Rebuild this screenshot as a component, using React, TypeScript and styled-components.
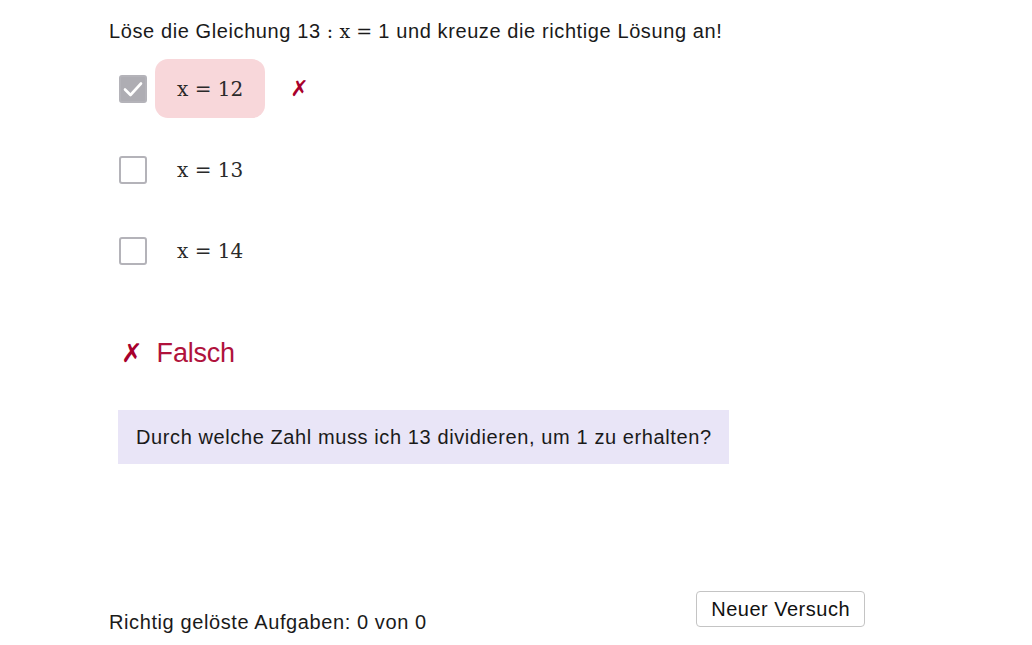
import React from "react"
import styled, { createGlobalStyle } from "styled-components"

type Option = { value: number; checked: boolean; wrong?: boolean }

const options: Option[] = [
  { value: 12, checked: true, wrong: true },
  { value: 13, checked: false },
  { value: 14, checked: false },
]

const CheckIcon = () => (
  <svg width="20" height="16" viewBox="0 0 20 16">
    <path d="M2 8.5 L7.5 14 L18 2.5" fill="none" stroke="#fff" strokeWidth="2.6" strokeLinecap="round" strokeLinejoin="round" />
  </svg>
)

export default function App(): JSX.Element {
  return (
    <Page>
      <GlobalStyle />
      <Title>
        Löse die Gleichung 13 <Op>:</Op> <Var>x</Var> <Op>=</Op> 1 und kreuze die richtige Lösung an!
      </Title>

      <OptionList>
        {options.map((o) => (
          <OptionRow key={o.value}>
            <Checkbox $checked={o.checked}>{o.checked && <CheckIcon />}</Checkbox>
            <Answer $wrong={o.wrong}>
              <Math>x = {o.value}</Math>
            </Answer>
            {o.wrong && <Cross>✗</Cross>}
          </OptionRow>
        ))}
      </OptionList>

      <Verdict>
        <VerdictMark>✗</VerdictMark>Falsch
      </Verdict>

      <Hint>Durch welche Zahl muss ich 13 dividieren, um 1 zu erhalten?</Hint>

      <Footer>
        <Score>Richtig gelöste Aufgaben: 0 von 0</Score>
        <RetryButton>Neuer Versuch</RetryButton>
      </Footer>
    </Page>
  )
}

const GlobalStyle = createGlobalStyle`
  body {
    margin: 0;
    background: #fff;
    color: #1a1a1a;
    font-family: "Liberation Sans", Arial, sans-serif;
    letter-spacing: 0.6px;
  }
`

const Page = styled.div`
  width: 1032px;
  height: 645px;
  box-sizing: border-box;
  padding: 19px 0 0 109px;
  display: flex;
  flex-direction: column;
  align-items: flex-start;
`

const Title = styled.p`
  margin: 0;
  font-size: 20px;
  line-height: 24px;
`

const Var = styled.span`
  font-family: "DejaVu Serif", serif;
  font-size: 19px;
  letter-spacing: 0;
`

const Op = styled.span`
  font-family: "DejaVu Serif", serif;
  font-size: 19px;
  letter-spacing: 0;
`

const OptionList = styled.div`
  margin: 16px 0 0 10px;
  display: flex;
  flex-direction: column;
  gap: 22px;
`

const OptionRow = styled.div`
  display: flex;
  align-items: center;
  height: 59px;
`

const Checkbox = styled.div<{ $checked: boolean }>`
  width: 28px;
  height: 28px;
  box-sizing: border-box;
  border-radius: 3px;
  border: 2px solid #b4b3b9;
  background: ${(p) => (p.$checked ? "#aeadb3" : "#fff")};
  display: flex;
  align-items: center;
  justify-content: center;
`

const Answer = styled.div<{ $wrong?: boolean }>`
  margin-left: 8px;
  height: 59px;
  padding: 0 22px;
  border-radius: 13px;
  display: flex;
  align-items: center;
  background: ${(p) => (p.$wrong ? "#f8d7da" : "transparent")};
`

const Math = styled.span`
  font-family: "DejaVu Serif", serif;
  font-size: 20px;
  letter-spacing: 0;
  color: #2a2a2a;
`

const Cross = styled.span`
  margin-left: 25px;
  font-family: "DejaVu Sans", sans-serif;
  font-size: 22px;
  color: #a8002c;
`

const Verdict = styled.div`
  margin: 56px 0 0 12px;
  display: flex;
  align-items: center;
  font-size: 27px;
  line-height: 34px;
  letter-spacing: -0.2px;
  color: #b0123c;
`

const VerdictMark = styled.span`
  margin-right: 14px;
  font-family: "DejaVu Sans", sans-serif;
  font-size: 26px;
  color: #a8002c;
`

const Hint = styled.div`
  margin: 40px 0 0 9px;
  width: 611px;
  height: 54px;
  box-sizing: border-box;
  padding: 0 18px;
  display: flex;
  align-items: center;
  white-space: nowrap;
  background: #e9e5f7;
  font-size: 20px;
`

const Footer = styled.div`
  margin-top: 127px;
  width: 756px;
  display: flex;
  justify-content: space-between;
  align-items: flex-start;
`

const Score = styled.div`
  margin-top: 19px;
  font-size: 20px;
  line-height: 24px;
`

const RetryButton = styled.button`
  height: 36px;
  padding: 0 14px;
  border: 1px solid #c4c4c4;
  border-radius: 4px;
  background: #fff;
  color: #111;
  font-family: "Liberation Sans", Arial, sans-serif;
  font-size: 20px;
  letter-spacing: 0.5px;
`
